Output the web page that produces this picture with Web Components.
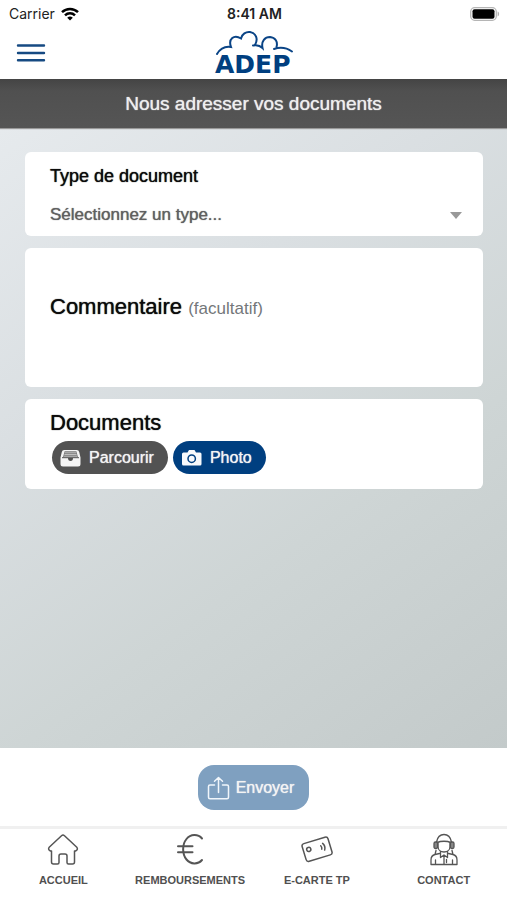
<!DOCTYPE html>
<html lang="fr">
<head>
<meta charset="utf-8">
<meta name="viewport" content="width=device-width, initial-scale=1">
<title>ADEP – Nous adresser vos documents</title>
<style>
  html { height: 100%; }
  body {
    margin: 0;
    min-height: 100%;
    display: flex;
    flex-direction: column;
    background: #fff;
    color: #0b0b0b;
    font-family: "Liberation Sans", Arial, sans-serif;
    --brand: #003f80;
    --dark: #525252;
    --medium: 0 0 1px currentColor;
  }
  document-form { flex: 1; }
</style>
</head>
<body>
<status-bar></status-bar>
<app-header></app-header>
<page-title>Nous adresser vos documents</page-title>
<document-form></document-form>
<submit-bar></submit-bar>
<tab-bar>
  <tab-item label="ACCUEIL" icon="home"></tab-item>
  <tab-item label="REMBOURSEMENTS" icon="euro"></tab-item>
  <tab-item label="E-CARTE TP" icon="card"></tab-item>
  <tab-item label="CONTACT" icon="agent"></tab-item>
</tab-bar>

<script>
const define = (name, html) => customElements.define(name, class extends HTMLElement {
  constructor() {
    super();
    this.attachShadow({ mode: 'open' }).innerHTML = html;
  }
});

define('status-bar', `
<style>
  :host { display: grid; grid-template-columns: 1fr auto 1fr; align-items: center; height: 27px; padding: 0 7px 0 9px; box-sizing: border-box; font: 500 14px/27px Inter, sans-serif; color: #222; }
  .left { display: flex; align-items: center; gap: 6px; font-weight: 400; }
  .time { font-weight: 600; }
  .battery { justify-self: end; }
  svg { display: block; }
</style>
<div class="left"><span>Carrier</span>
  <svg width="18" height="14" viewBox="0 0 18 14" fill="none" stroke="#000" stroke-width="2.5" aria-hidden="true">
    <path d="M1 5.1a11.6 11.6 0 0 1 16 0"/><path d="M4 8.3a7.2 7.2 0 0 1 10 0"/><path d="M9 13.6 6.2 10.8a4 4 0 0 1 5.6 0z" fill="#000" stroke="none"/>
  </svg>
</div>
<span class="time">8:41 AM</span>
<svg class="battery" width="30" height="14" viewBox="0 0 30 14" aria-hidden="true">
  <rect x=".7" y=".7" width="25.6" height="12.6" rx="4" fill="#fff" stroke="#b5b5b5" stroke-width="1.3"/>
  <rect x="2.5" y="2.3" width="22" height="9.4" rx="2" fill="#000"/>
  <path d="M27.6 4.6c2 .5 2 4.300 0 4.800z" fill="#b0b0b0"/>
</svg>`);

define('app-header', `
<style>
  :host { display: grid; grid-template-columns: 1fr auto 1fr; align-items: center; height: 52px; padding: 0 16px; }
  button { justify-self: start; border: 0; background: none; padding: 0; cursor: pointer; }
  a { display: block; }
  svg { display: block; }
  text { font: 700 25px "DejaVu Sans", sans-serif; fill: var(--brand); }
</style>
<button type="button" aria-label="Menu">
  <svg width="30" height="20" viewBox="0 0 30 20" stroke="#164a82" stroke-width="2.400" stroke-linecap="round"><path d="M2 2.500h26M2 10h26M2 17.300h26"/></svg>
</button>
<a href="#" aria-label="ADEP">
  <svg width="80" height="52" viewBox="0 0 80 52">
    <g fill="none" stroke="#0a4486" stroke-width="2" stroke-linecap="round">
      <path d="M3 27C6 22 11 19 17 20C14 12 20 7 27 11.500C28 7 32 4.500 36 5C42 6 44.500 12 41 18"/>
      <path d="M39 18.500C43 17.500 46 18.500 48.500 21C47 14 51 10 56 10C61.500 10.500 64 15 62.500 20"/>
      <path d="M60 22C66 20 73 21 78 24.500"/>
    </g>
    <text x="1" y="46">ADEP</text>
  </svg>
</a>`);

define('page-title', `
<style>
  :host { display: flex; justify-content: center; align-items: center; height: 49px; color: #eee; background: linear-gradient(#444, #505050 12px, #555); box-shadow: 0 1px 1px #999; position: relative; }
  h1 { margin: 0; font-size: 19px; font-weight: 400; line-height: 24px; text-shadow: var(--medium); }
</style>
<h1><slot></slot></h1>`);

define('form-card', `
<style>
  :host { display: block; background: #fff; border-radius: 6px; padding: 12px 21px 6px 25px; }
</style>
<slot></slot>`);

define('pill-button', `
<style>
  :host { display: inline-block; }
  button { display: flex; align-items: center; gap: 8px; border: 0; margin: 0; height: 33px; padding: 0 14px 0 8px; border-radius: 17px; background: var(--pill, var(--dark)); color: #f4f4f4; font: 16px/20px "Liberation Sans", Arial, sans-serif; text-shadow: var(--medium); cursor: pointer; }
  :host([large]) button { height: 45px; border-radius: 16px; gap: 6px; padding: 0 15px 0 9px; }
</style>
<button type="button"><slot name="icon"></slot><slot></slot></button>`);

define('document-form', `
<style>
  :host { display: block; padding: 24px 24px 24px 25px; background: linear-gradient(144deg, #e6eaed 0%, #dadfe2 32%, #ced5d5 64%, #c3caca 100%); }
  form { display: flex; flex-direction: column; gap: 12px; }
  label, h2 { display: block; margin: 0; font-weight: 400; text-shadow: var(--medium); }
  .type label { font-size: 18px; line-height: 24px; }
  .field { display: flex; align-items: center; margin-top: 12px; }
  select { appearance: none; flex: 1; min-width: 0; border: 0; margin: 0; padding: 0; height: 30px; background: none; color: #606060; font: 17px/30px "Liberation Sans", Arial, sans-serif; text-shadow: var(--medium); outline: 0; }
  .comment { padding: 46px 21px 23px 25px; }
  .comment label, h2 { font-size: 22px; line-height: 26px; }
  small { font-size: 17px; line-height: 20px; color: #74777a; text-shadow: none; }
  textarea { display: block; width: 100%; box-sizing: border-box; height: 44px; border: 0; padding: 0; margin: 0; resize: none; background: none; font: 17px/22px "Liberation Sans", Arial, sans-serif; outline: 0; }
  .docs { padding: 11px 21px 15px 25px; }
  .actions { display: flex; gap: 5px; margin: 5px 2px 0; }
  .blue { --pill: var(--brand); }
  svg { display: block; }
</style>
<form>
  <form-card class="type">
    <label for="type">Type de document</label>
    <div class="field">
      <select id="type"><option>Sélectionnez un type...</option></select>
      <svg width="12" height="7" viewBox="0 0 12 7" aria-hidden="true"><path d="M0 0h12L6 7z" fill="#999"/></svg>
    </div>
  </form-card>
  <form-card class="comment">
    <label for="comment">Commentaire <small>(facultatif)</small></label>
    <textarea id="comment"></textarea>
  </form-card>
  <form-card class="docs">
    <h2>Documents</h2>
    <div class="actions">
      <pill-button>
        <svg slot="icon" width="21" height="20" viewBox="0 0 21 20" aria-hidden="true">
          <path d="M4.200 2h12.600q2 0 2.400 2l1.300 5.500v6.500q0 2.500-2.500 2.500H3q-2.500 0-2.500-2.500V9.500L1.800 4q.4-2 2.400-2z" fill="#f4f4f4"/>
          <path d="M4.600 3.200h11.800l1.600 6H3z" fill="#777"/><path d="M4.800 4.800h11.400M4.400 6.500h12.200M4 8.200h13" stroke="#d2d2d2" stroke-width=".8"/>
          <path d="M2 9.700h17" stroke="#525252"/><path d="M8 10h5q0 3-2.500 3T8 10z" fill="#525252"/>
        </svg>Parcourir</pill-button>
      <pill-button class="blue">
        <svg slot="icon" width="21" height="20" viewBox="0 0 21 20" aria-hidden="true">
          <path d="M2.500 4.500h4L8 2h5.500L15 4.500h4q1.500 0 1.500 1.500v10q0 1.500-1.500 1.500H2.500Q1 17.500 1 16V6q0-1.500 1.500-1.500z" fill="#f7f9fc"/>
          <circle cx="10.700" cy="10.700" r="3.700" fill="none" stroke="#003f80" stroke-width="1.500"/>
        </svg>Photo</pill-button>
    </div>
  </form-card>
</form>`);

define('submit-bar', `
<style>
  :host { display: flex; justify-content: center; padding: 17px 0 16px; --pill: #7fa0c0; }
  svg { display: block; }
</style>
<pill-button large>
  <svg slot="icon" width="23" height="24" viewBox="0 0 23 24" fill="none" stroke="#f1f6fb" stroke-width="1.500" stroke-linecap="round" stroke-linejoin="round" aria-hidden="true"><path d="M7.500 9H3q-1.500 0-1.500 1.500v10.800q0 1.500 1.500 1.500h17q1.500 0 1.500-1.500V10.500Q21.500 9 20 9h-4.500M11.500 16.500V1.500M7.500 5.300l4-3.800 4 3.800"/></svg>Envoyer</pill-button>`);

define('tab-bar', `
<style>
  :host { display: block; border-top: 3px solid #f0f0f0; background: #fff; }
  nav { display: grid; grid-template-columns: repeat(4, 1fr); height: 71px; }
</style>
<nav><slot></slot></nav>`);

const icons = {
  home: '<path d="M3.500 18Q.5 16.500 2.200 14.300L14.500 2.700q1.500-1.300 3 0L29.800 14.300Q31.500 16.500 28.500 18H27.500V29q0 2-2 2H21.500q-1.500 0-1.500-1.500V23q0-2-2-2h-4q-2 0-2 2v6.500q0 1.500-1.500 1.500H6.500q-2 0-2-2V18z"/>',
  euro: '<path stroke-width="2" d="M28 5.500C24 .8 16.500 1 12.500 6C8 11.500 8 21 12.500 26.500C16.500 31.500 24 31.700 28 27M4 13.200h14.500M4 19.300h14.500"/>',
  card: '<g transform="rotate(-17 16 16)"><rect x="2.500" y="7" width="27" height="18.500" rx="2.500"/><circle cx="8" cy="14" r="2.100"/><path d="M20.500 14q1 1.800 0 3.600M23 12.300q2.200 3.500 0 7"/></g>',
  agent: '<g stroke-width="1.300"><path d="M8.500 9C9.500 4 12 1.500 16 1.500S22.500 4 23.500 9M10 9.500C12 7.800 20 7.800 22 9.500M10 9v4.500c0 3.500 2.800 5.500 6 5.500s6-2 6-5.500V9"/><path d="M3 31.500v-4.500Q3 22.500 7 21.500L11.500 20.500M29 31.500v-4.500Q29 22.500 25 21.500L20.500 20.500M3 31.500h26M7.500 31v-4M24.500 31v-4M16 22.500V31M18.500 26.500v3M12.500 18.500v6l3.500-2.500 3.500 2.500v-6M8 17.500l-1 4M24 17.500l1 4"/><rect x="6" y="9" width="3.600" height="6.500" rx="1.500" fill="#888"/><rect x="22.400" y="9" width="3.600" height="6.500" rx="1.500" fill="#888"/></g>'
};

customElements.define('tab-item', class extends HTMLElement {
  constructor() {
    super();
    this.attachShadow({ mode: 'open' });
  }
  connectedCallback() {
    this.shadowRoot.innerHTML = `
<style>
  :host { display: block; min-width: 0; }
  a { display: flex; flex-direction: column; align-items: center; gap: 6px; padding-top: 4px; color: #505050; text-decoration: none; font-size: 11px; font-weight: 700; line-height: 16px; white-space: nowrap; }
  svg { display: block; }
</style>
<a href="#${this.getAttribute('icon')}"><svg width="32" height="33" viewBox="0 0 32 33" fill="none" stroke="#555" stroke-width="1.500" stroke-linecap="round" stroke-linejoin="round" aria-hidden="true">${icons[this.getAttribute('icon')]}</svg><span>${this.getAttribute('label')}</span></a>`;
  }
});
</script>
</body>
</html>
